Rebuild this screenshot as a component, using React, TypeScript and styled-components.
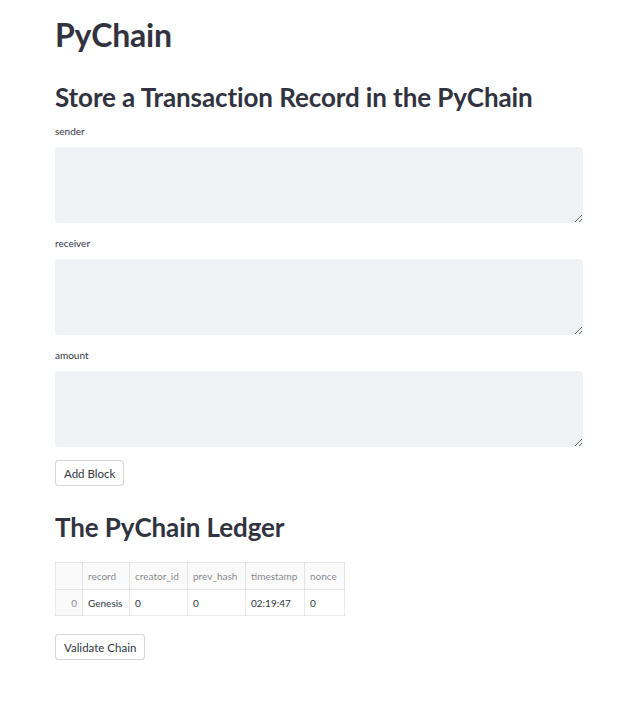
import React from "react";
import styled, { createGlobalStyle } from "styled-components";

const Global = createGlobalStyle`
  html, body { margin: 0; padding: 0; background: #ffffff; }
  body { font-family: "Lato", "Open Sans", sans-serif; color: #31333f; }
  * { box-sizing: border-box; }
`;

const Main = styled.main`
  width: 528px;
  margin-left: 55px;
  padding-top: 14px;
  display: flex;
  flex-direction: column;
`;

const Title = styled.h1`
  margin: 0;
  font-size: 32px;
  font-weight: 700;
  line-height: 42px;
  letter-spacing: -0.2px;
`;

const Heading = styled.h2<{ $top: number }>`
  margin: ${(p) => p.$top}px 0 0 0;
  font-size: 26px;
  font-weight: 700;
  line-height: 34px;
  letter-spacing: -0.1px;
`;

const Field = styled.div<{ $top: number }>`
  display: flex;
  flex-direction: column;
  margin-top: ${(p) => p.$top}px;
`;

const Label = styled.label`
  font-size: 10px;
  line-height: 14px;
  height: 23px;
`;

const Area = styled.textarea`
  width: 528px;
  height: 76px;
  border: none;
  border-radius: 4px;
  background: #f0f2f6;
  resize: vertical;
  font-family: inherit;
  outline: none;
`;

const Button = styled.button<{ $top: number }>`
  align-self: flex-start;
  margin-top: ${(p) => p.$top}px;
  height: 26px;
  padding: 0 8px;
  background: #ffffff;
  border: 1px solid rgba(49, 51, 63, 0.2);
  border-radius: 4px;
  font-family: inherit;
  font-size: 11.5px;
  color: #31333f;
`;

const Table = styled.table`
  margin-top: 18px;
  border-collapse: collapse;
  font-size: 10px;
  align-self: flex-start;
`;

const Th = styled.th<{ $w: number }>`
  width: ${(p) => p.$w}px;
  height: 27px;
  padding: 0 5px;
  font-weight: 400;
  color: rgba(49, 51, 63, 0.6);
  text-align: left;
  border: 1px solid rgba(49, 51, 63, 0.1);
  background: #fafafa;
`;

const Td = styled.td<{ $idx?: boolean }>`
  height: 26px;
  padding: 0 5px;
  text-align: ${(p) => (p.$idx ? "right" : "left")};
  color: ${(p) => (p.$idx ? "rgba(49,51,63,0.6)" : "#31333f")};
  border: 1px solid rgba(49, 51, 63, 0.1);
  background: ${(p) => (p.$idx ? "#fafafa" : "#ffffff")};
`;

const cols: [string, number][] = [
  ["", 27],
  ["record", 47],
  ["creator_id", 58],
  ["prev_hash", 58],
  ["timestamp", 59],
  ["nonce", 40],
];

export default function App() {
  return (
    <>
      <Global />
      <Main>
        <Title>PyChain</Title>
        <Heading $top={24}>Store a Transaction Record in the PyChain</Heading>
        <Field $top={10}>
          <Label>sender</Label>
          <Area />
        </Field>
        <Field $top={13}>
          <Label>receiver</Label>
          <Area />
        </Field>
        <Field $top={13}>
          <Label>amount</Label>
          <Area />
        </Field>
        <Button $top={13}>Add Block</Button>
        <Heading $top={24}>The PyChain Ledger</Heading>
        <Table>
          <thead>
            <tr>
              {cols.map(([c, w]) => (
                <Th key={c || "i"} $w={w}>{c}</Th>
              ))}
            </tr>
          </thead>
          <tbody>
            <tr>
              <Td $idx>0</Td>
              <Td>Genesis</Td>
              <Td>0</Td>
              <Td>0</Td>
              <Td>02:19:47</Td>
              <Td>0</Td>
            </tr>
          </tbody>
        </Table>
        <Button $top={18}>Validate Chain</Button>
      </Main>
    </>
  );
}
